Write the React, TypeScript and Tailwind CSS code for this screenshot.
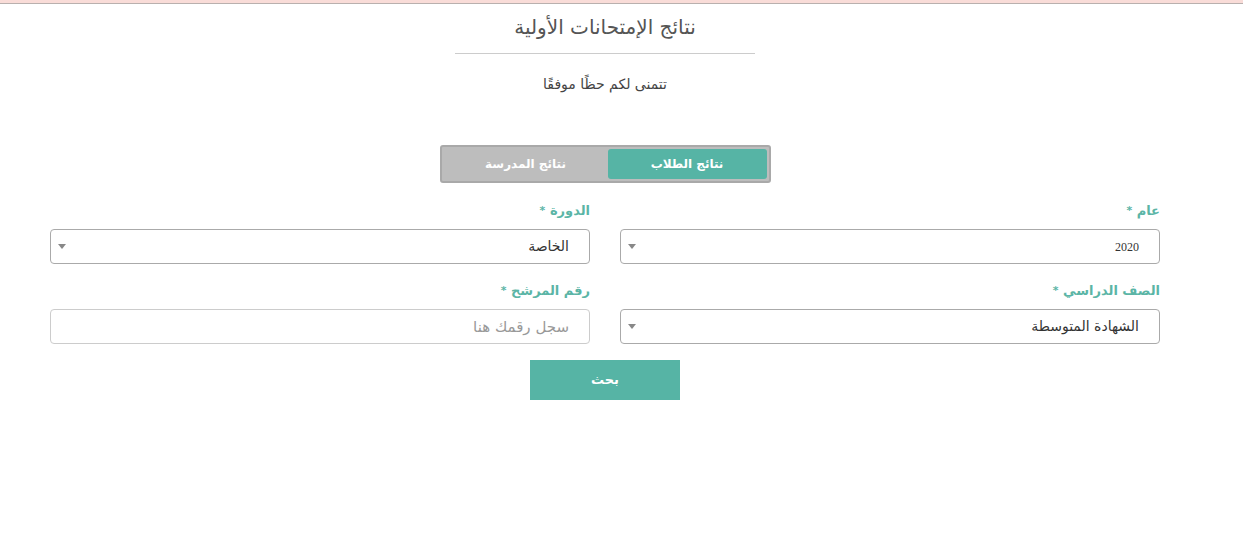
import React, { useState } from "react";

const font = { fontFamily: '"DejaVu Sans", "Noto Sans", sans-serif' };

function Arrow() {
  return (
    <svg width="8" height="5" viewBox="0 0 8 5" className="shrink-0">
      <path d="M0 0 L8 0 L4 5 Z" fill="#888" />
    </svg>
  );
}

function SelectBox({ label, value, num }: { label: string; value: string; num?: boolean }) {
  return (
    <div className="flex flex-col">
      <label className="text-[13px] font-bold text-[#5bb5a6] mb-[8px] mt-[2px] leading-[20px]">
        {label} <span className="text-[11px] align-top">*</span>
      </label>
      <div className="h-[35px] border border-[#aaa] rounded-[4px] bg-white flex items-center justify-between pr-[20px] pl-[7px]">
        <span
          className={num ? "text-[12px] text-[#333]" : "text-[14px] text-[#333]"}
          style={num ? { fontFamily: '"Liberation Serif", serif' } : undefined}
        >
          {value}
        </span>
        <Arrow />
      </div>
    </div>
  );
}

export default function App() {
  const [tab, setTab] = useState("students");

  return (
    <div dir="rtl" className="min-h-[535px] bg-white" style={font}>
      <div className="h-[3px] bg-[#f9dcd8]" />
      <div className="h-px bg-[#b9b0ae]" />

      <div className="w-[1140px] mr-[68px] px-[15px]">
        {/* العنوان */}
        <div className="flex flex-col items-center">
          <h1 className="text-[20px] text-[#555] mt-[11px] leading-[24px]">نتائج الإمتحانات الأولية</h1>
          <div className="w-[300px] h-px bg-[#ccc] mt-[14px]" />
          <p className="text-[14px] text-[#444] mt-[20px] leading-[20px]">تتمنى لكم حظًا موفقًا</p>
        </div>

        {/* التبويبات */}
        <div className="flex justify-center mt-[51px]">
          <div className="w-[331px] h-[38px] bg-[#bdbdbd] border-2 border-[#a9a9a9] rounded-[3px] p-[2px] flex">
            <button
              onClick={() => setTab("students")}
              className={`w-[159px] rounded-[3px] text-[12px] font-bold ${
                tab === "students" ? "bg-[#56b4a5] text-white" : "text-white"
              }`}
            >
              نتائج الطلاب
            </button>
            <button
              onClick={() => setTab("schools")}
              className={`flex-1 rounded-[3px] text-[12px] font-bold ${
                tab === "schools" ? "bg-[#56b4a5] text-white" : "text-white"
              }`}
            >
              نتائج المدرسة
            </button>
          </div>
        </div>

        {/* النموذج */}
        <div className="grid grid-cols-2 gap-x-[30px] mt-[16px]">
          <SelectBox label="عام" value="2020" num />
          <SelectBox label="الدورة" value="الخاصة" />
        </div>
        <div className="grid grid-cols-2 gap-x-[30px] mt-[15px]">
          <SelectBox label="الصف الدراسي" value="الشهادة المتوسطة" />
          <div className="flex flex-col">
            <label className="text-[13px] font-bold text-[#5bb5a6] mb-[8px] mt-[2px] leading-[20px]">
              رقم المرشح <span className="text-[11px] align-top">*</span>
            </label>
            <input
              placeholder="سجل رقمك هنا"
              className="h-[35px] border border-[#ccc] rounded-[4px] pr-[20px] text-[15px] placeholder:text-[#999] outline-none"
            />
          </div>
        </div>

        <div className="flex justify-center mt-[16px]">
          <button className="w-[150px] h-[40px] bg-[#56b4a5] text-white text-[13px] font-bold">بحث</button>
        </div>
      </div>
    </div>
  );
}
